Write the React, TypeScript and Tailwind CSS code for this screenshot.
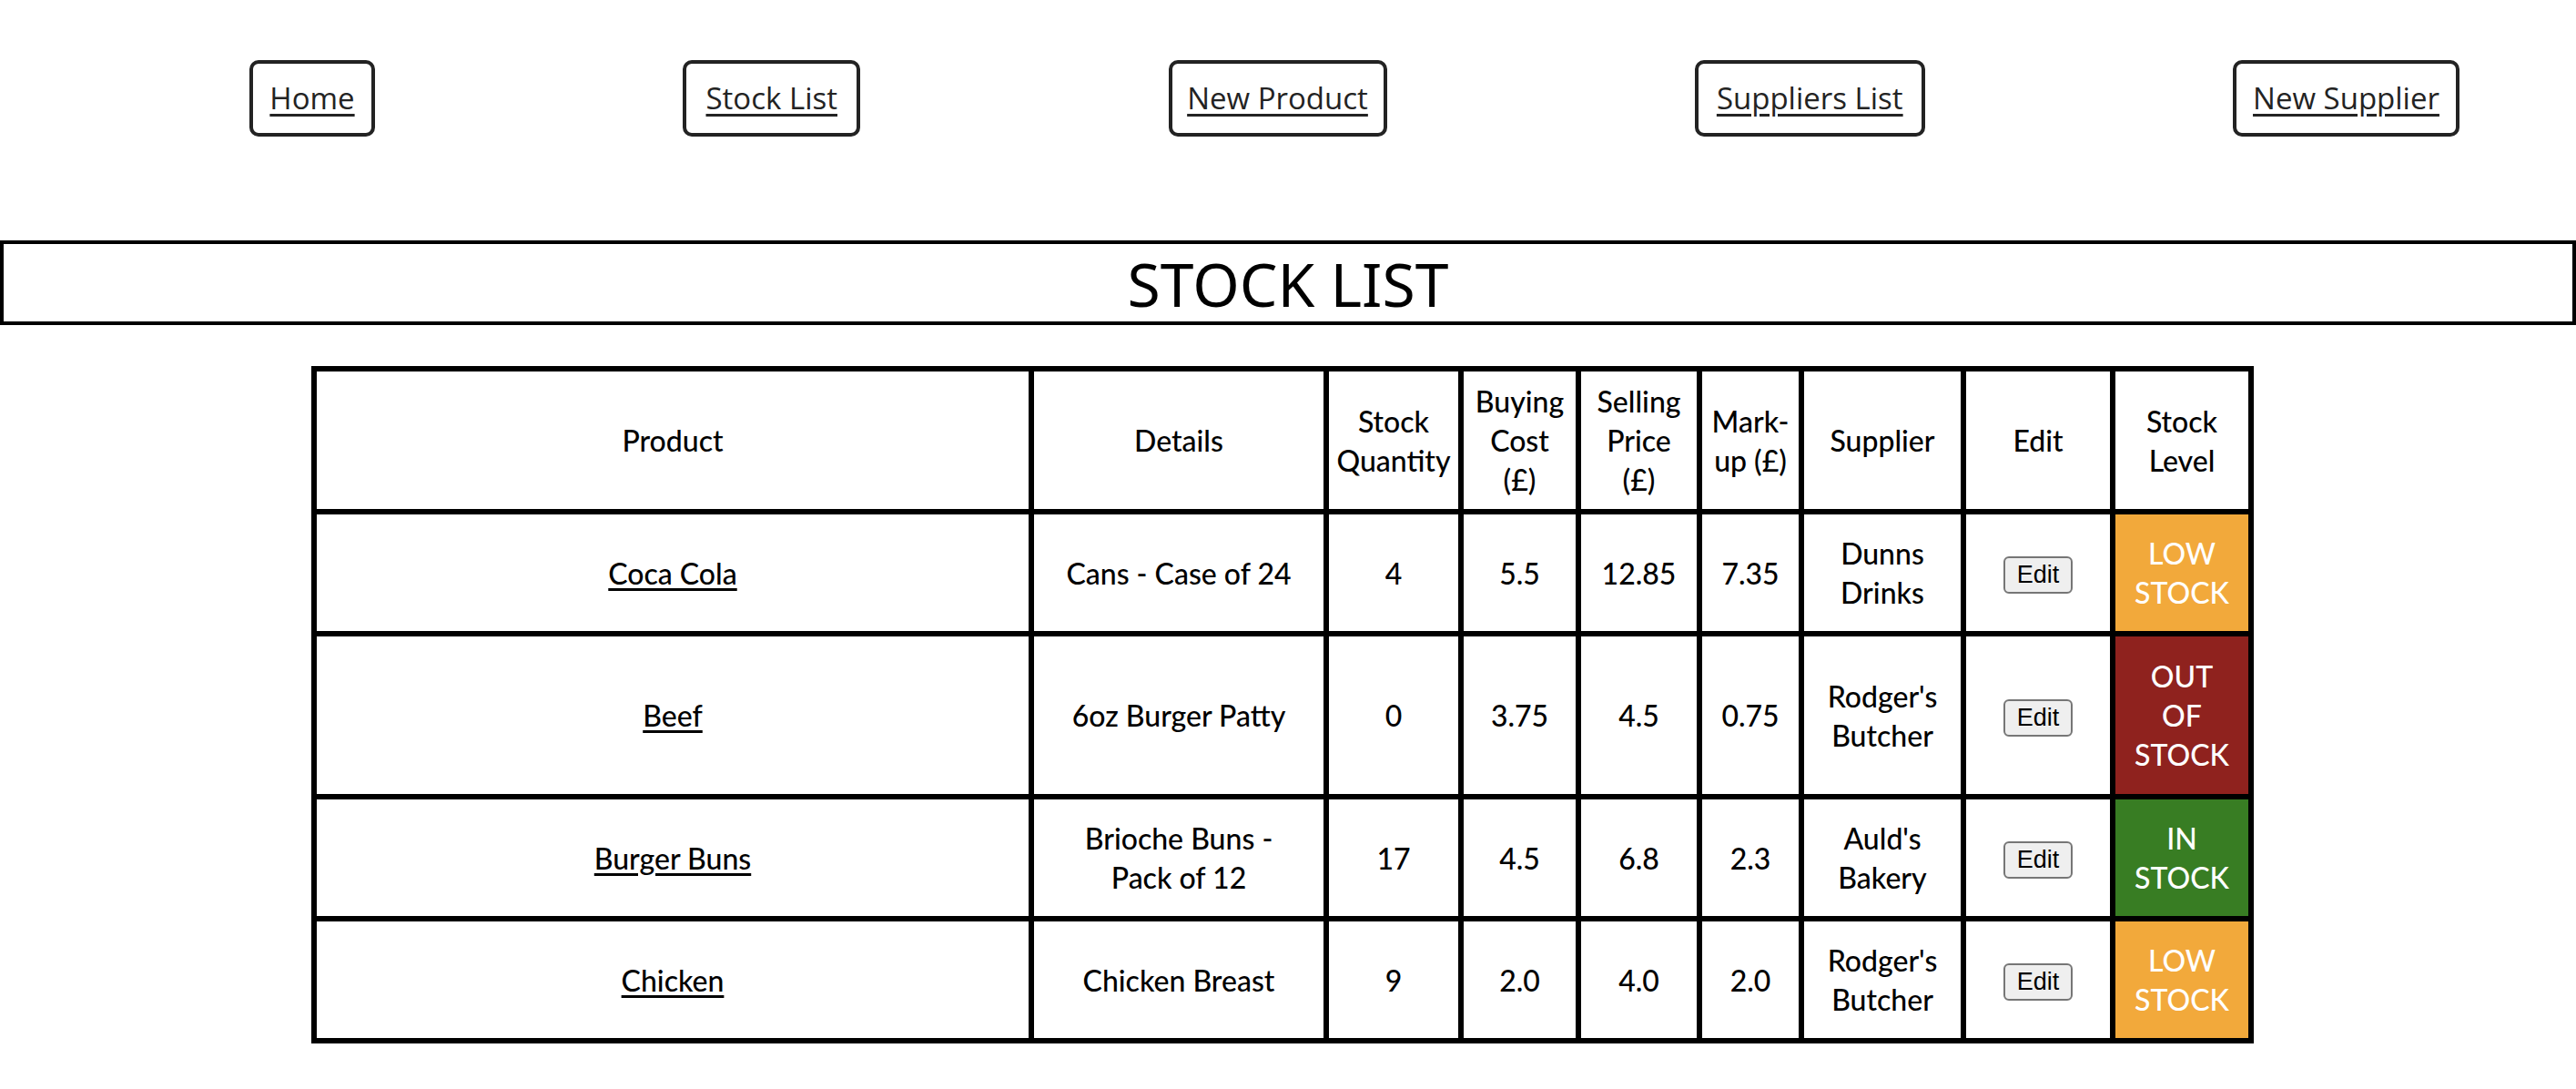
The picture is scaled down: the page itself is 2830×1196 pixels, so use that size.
import React from 'react';

const navLinks = [
  { label: 'Home', width: 'w-[138px]' },
  { label: 'Stock List', width: 'w-[195px]' },
  { label: 'New Product', width: 'w-[240px]' },
  { label: 'Suppliers List', width: 'w-[253px]' },
  { label: 'New Supplier', width: 'w-[249px]' },
];

type Level = 'low' | 'out' | 'in';

interface StockRow {
  product: string;
  details: React.ReactNode;
  quantity: string;
  buying: string;
  selling: string;
  markup: string;
  supplier: React.ReactNode;
  level: Level;
  height: string;
}

const rows: StockRow[] = [
  {
    product: 'Coca Cola',
    details: 'Cans - Case of 24',
    quantity: '4',
    buying: '5.5',
    selling: '12.85',
    markup: '7.35',
    supplier: <>Dunns<br />Drinks</>,
    level: 'low',
    height: 'h-[133px]',
  },
  {
    product: 'Beef',
    details: '6oz Burger Patty',
    quantity: '0',
    buying: '3.75',
    selling: '4.5',
    markup: '0.75',
    supplier: <>Rodger's<br />Butcher</>,
    level: 'out',
    height: 'h-[179px]',
  },
  {
    product: 'Burger Buns',
    details: <>Brioche Buns -<br />Pack of 12</>,
    quantity: '17',
    buying: '4.5',
    selling: '6.8',
    markup: '2.3',
    supplier: <>Auld's<br />Bakery</>,
    level: 'in',
    height: 'h-[134px]',
  },
  {
    product: 'Chicken',
    details: 'Chicken Breast',
    quantity: '9',
    buying: '2.0',
    selling: '4.0',
    markup: '2.0',
    supplier: <>Rodger's<br />Butcher</>,
    level: 'low',
    height: 'h-[134px]',
  },
];

const levelStyle: Record<Level, { cls: string; text: React.ReactNode }> = {
  low: { cls: 'bg-[#f2a93b]', text: <>LOW<br />STOCK</> },
  out: { cls: 'bg-[#8f221e]', text: <>OUT<br />OF<br />STOCK</> },
  in: { cls: 'bg-[#387d23]', text: <>IN<br />STOCK</> },
};

const th = 'border-l-[6px] border-t-[6px] border-black font-medium text-center align-middle py-[11px] px-0';
const td = 'border-l-[6px] border-t-[6px] border-black text-center align-middle py-[21px] px-0';

export default function App() {
  return (
    <div className="min-h-screen bg-white text-black">
      <nav className="flex justify-between pl-[274px] pr-[128px] pt-[66px]">
        {navLinks.map((link) => (
          <a
            key={link.label}
            href="#"
            className={`${link.width} h-[84px] flex items-center justify-center border-4 border-[#232323] rounded-[10px] text-[33px] text-[#232323] underline underline-offset-[5px] font-['Open_Sans',sans-serif]`}
          >
            {link.label}
          </a>
        ))}
      </nav>

      <h1 className="mt-[114px] h-[93px] border-4 border-black flex items-center justify-center text-[66px] font-['Noto_Sans',sans-serif] leading-none">
        STOCK LIST
      </h1>

      <table className="mt-[45px] ml-[342px] w-[2134px] table-fixed border-separate border-spacing-0 border-r-[6px] border-b-[6px] border-black text-[32px] leading-[43px] font-medium font-['Lato',sans-serif] whitespace-nowrap">
        <thead>
          <tr>
            <th className={`${th} w-[788px]`}>Product</th>
            <th className={`${th} w-[324px]`}>Details</th>
            <th className={`${th} w-[148px]`}>Stock<br />Quantity</th>
            <th className={`${th} w-[129px]`}>Buying<br />Cost<br />(£)</th>
            <th className={`${th} w-[133px]`}>Selling<br />Price<br />(£)</th>
            <th className={`${th} w-[112px]`}>Mark-<br />up (£)</th>
            <th className={`${th} w-[178px]`}>Supplier</th>
            <th className={`${th} w-[164px]`}>Edit</th>
            <th className={th}>Stock<br />Level</th>
          </tr>
        </thead>
        <tbody>
          {rows.map((row) => (
            <tr key={row.product} className={row.height}>
              <td className={td}>
                <a href="#" className="underline underline-offset-[4px]">{row.product}</a>
              </td>
              <td className={td}>{row.details}</td>
              <td className={td}>{row.quantity}</td>
              <td className={td}>{row.buying}</td>
              <td className={td}>{row.selling}</td>
              <td className={td}>{row.markup}</td>
              <td className={td}>{row.supplier}</td>
              <td className={td}>
                <button
                  type="button"
                  className="h-[41px] px-[13px] border-2 border-[#767676] rounded-[6px] bg-[#efefef] text-[27px] leading-none font-normal text-black font-['Liberation_Sans',Arial,sans-serif]"
                >
                  Edit
                </button>
              </td>
              <td className={`${td} ${levelStyle[row.level].cls} text-white`}>
                {levelStyle[row.level].text}
              </td>
            </tr>
          ))}
        </tbody>
      </table>
    </div>
  );
}
